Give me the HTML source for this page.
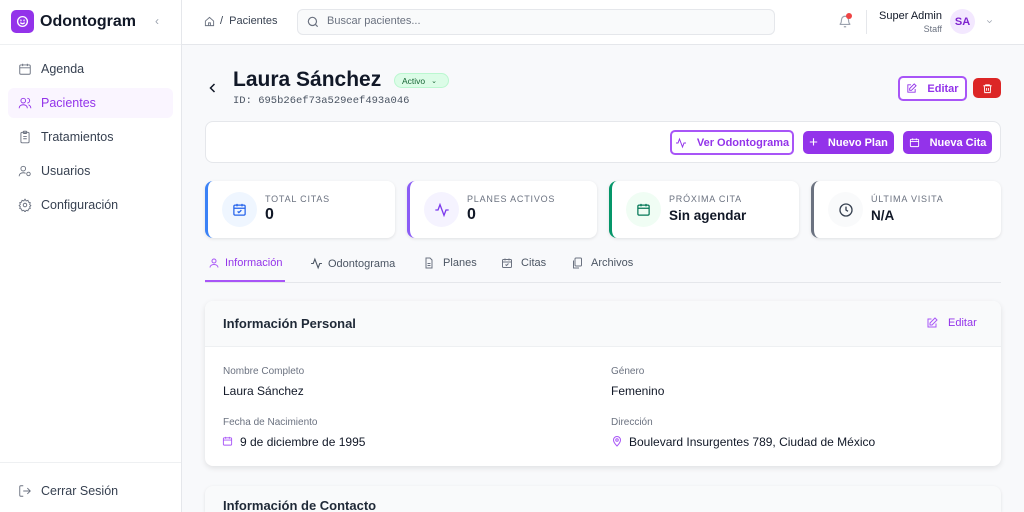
<!DOCTYPE html>
<html style="width:1024px;height:512px;overflow:hidden"><head><meta charset="utf-8"><style>
*{box-sizing:border-box;margin:0;padding:0}
body{width:1024px;height:512px;overflow:hidden;background:#f8f9fb;font-family:"Liberation Sans",sans-serif;color:#111827;position:relative}
.a{position:absolute}
svg{display:block}
.side{left:0;top:0;width:182px;height:512px;background:#fff;border-right:1px solid #e5e7eb}
.nav{left:8px;width:165px;height:30px;border-radius:6px;font-size:12.5px;color:#374151;display:flex;align-items:center;padding-left:10px;gap:9px}
.card{background:#fff;border-radius:8px;box-shadow:0 1px 3px rgba(0,0,0,.1);}
.stat{top:181px;width:190px;height:57px}
.stat .ic{position:absolute;left:14px;top:11px;width:35px;height:35px;border-radius:50%;display:flex;align-items:center;justify-content:center}
.stat .l{position:absolute;left:57px;top:13px;font-size:9px;letter-spacing:.8px;color:#6b7280}
.stat .v{position:absolute;left:57px;top:25px;font-size:16px;font-weight:bold}
.tab{top:257px;font-size:11px;color:#4b5563;display:flex;align-items:center;gap:5px}
.lb{font-size:10px;color:#6b7280}
.vl{font-size:12px;color:#111827}
.btn{border-radius:5px;font-size:11px;font-weight:bold;display:flex;align-items:center;justify-content:center;gap:10px}
</style></head><body>
<div class="a side">
 <div class="a" style="left:11px;top:10px;width:23px;height:23px;border-radius:5px;background:#9333ea;display:flex;align-items:center;justify-content:center"><svg width="13" height="13" viewBox="0 0 24 24" fill="none" stroke="#fff" stroke-width="2.5"><circle cx="12" cy="12" r="9"/><path d="M8 14s1.5 2 4 2 4-2 4-2"/><circle cx="9" cy="10" r=".5"/><circle cx="15" cy="10" r=".5"/></svg></div>
 <div class="a" style="left:40px;top:13px;font-size:16px;font-weight:bold">Odontogram</div>
 <div class="a" style="left:155px;top:14px;color:#9ca3af;font-size:12px">‹</div>
 <div class="a" style="left:0;top:44px;width:181px;border-top:1px solid #eef0f2"></div>
 <div class="a nav" style="top:54px"><svg width="14" height="14" viewBox="0 0 24 24" fill="none" stroke="#6b7280" stroke-width="1.6"><rect x="3" y="5" width="18" height="16" rx="2"/><path d="M3 10h18M8 3v4M16 3v4"/></svg>Agenda</div>
 <div class="a nav" style="top:88px;background:#faf5ff;color:#9333ea"><svg width="14" height="14" viewBox="0 0 24 24" fill="none" stroke="#9333ea" stroke-width="1.6"><circle cx="9" cy="8" r="4"/><path d="M2 21c0-4 3-6 7-6s7 2 7 6M16 4a4 4 0 010 8M22 21c0-3-2-5-4-6"/></svg>Pacientes</div>
 <div class="a nav" style="top:122px"><svg width="14" height="14" viewBox="0 0 24 24" fill="none" stroke="#6b7280" stroke-width="1.6"><rect x="5" y="4" width="14" height="18" rx="2"/><rect x="9" y="2" width="6" height="4" rx="1"/><path d="M9 11h6M9 15h6"/></svg>Tratamientos</div>
 <div class="a nav" style="top:156px"><svg width="14" height="14" viewBox="0 0 24 24" fill="none" stroke="#6b7280" stroke-width="1.6"><circle cx="9" cy="8" r="4"/><path d="M2 21c0-4 3-6 7-6 2 0 3 .5 4 1"/><circle cx="18" cy="17" r="3"/></svg>Usuarios</div>
 <div class="a nav" style="top:190px"><svg width="14" height="14" viewBox="0 0 24 24" fill="none" stroke="#6b7280" stroke-width="1.6"><circle cx="12" cy="12" r="3"/><path d="M12 2l2 3 3-1 1 3 3 1-1 3 2 2-2 2 1 3-3 1-1 3-3-1-2 3-2-3-3 1-1-3-3-1 1-3-2-2 2-2-1-3 3-1 1-3 3 1z"/></svg>Configuración</div>
 <div class="a" style="left:0;top:462px;width:181px;border-top:1px solid #eef0f2"></div>
 <div class="a nav" style="top:476px"><svg width="14" height="14" viewBox="0 0 24 24" fill="none" stroke="#6b7280" stroke-width="1.6"><path d="M9 21H5a2 2 0 01-2-2V5a2 2 0 012-2h4M16 17l5-5-5-5M21 12H9"/></svg>Cerrar Sesión</div>
</div>
<div class="a" style="left:182px;top:0;width:842px;height:45px;background:#fff;border-bottom:1px solid #e5e7eb"></div>
<svg class="a" style="left:204px;top:16px" width="11" height="11" viewBox="0 0 24 24" fill="none" stroke="#6b7280" stroke-width="2"><path d="M3 11l9-8 9 8v10H3z"/><path d="M10 21v-6h4v6"/></svg>
<div class="a" style="left:220px;top:15px;font-size:11px;color:#374151">/&nbsp;&nbsp;Pacientes</div>
<div class="a" style="left:297px;top:9px;width:478px;height:26px;border:1px solid #e5e7eb;border-radius:6px;background:#f9fafb"></div>
<svg class="a" style="left:306px;top:15px" width="14" height="14" viewBox="0 0 24 24" fill="none" stroke="#6b7280" stroke-width="2"><circle cx="11" cy="11" r="7"/><path d="M20 20l-4-4"/></svg>
<div class="a" style="left:327px;top:15px;font-size:11px;color:#6b7280">Buscar pacientes...</div>
<svg class="a" style="left:838px;top:14px" width="14" height="15" viewBox="0 0 24 24" fill="none" stroke="#9ca3af" stroke-width="2"><path d="M6 9a6 6 0 0112 0c0 7 3 8 3 8H3s3-1 3-8M10 21h4"/></svg>
<div class="a" style="left:846px;top:13px;width:6px;height:6px;border-radius:50%;background:#ef4444"></div>
<div class="a" style="left:866px;top:10px;height:24px;border-left:1px solid #e5e7eb"></div>
<div class="a" style="left:860px;top:10px;width:82px;text-align:right;font-size:11px;color:#111827">Super Admin</div>
<div class="a" style="left:860px;top:24px;width:82px;text-align:right;font-size:9px;color:#6b7280">Staff</div>
<div class="a" style="left:950px;top:9px;width:25px;height:25px;border-radius:50%;background:#f3e8ff;color:#7e22ce;font-weight:bold;font-size:11px;display:flex;align-items:center;justify-content:center">SA</div>
<svg class="a" style="left:985px;top:17px" width="9" height="9" viewBox="0 0 24 24" fill="none" stroke="#9ca3af" stroke-width="2"><path d="M6 9l6 6 6-6"/></svg>

<svg class="a" style="left:207px;top:82px" width="12" height="12" viewBox="0 0 24 24" fill="none" stroke="#111827" stroke-width="3"><path d="M15 4l-8 8 8 8"/></svg>
<div class="a" style="left:233px;top:68px;font-size:21px;font-weight:bold">Laura Sánchez</div>
<div class="a" style="left:394px;top:73px;width:55px;height:15px;border-radius:8px;background:#dcfce7;border:1px solid #bbf7d0;font-size:8.5px;color:#166534;display:flex;align-items:center;padding-left:7px">Activo <span style="margin-left:6px;font-size:7px">⌄</span></div>
<div class="a" style="left:233px;top:95px;font-family:'Liberation Mono',monospace;font-size:10.5px;color:#4b5563">ID: 695b26ef73a529eef493a046</div>
<div class="a btn" style="left:898px;top:76px;width:69px;height:25px;border:2px solid #a855f7;color:#9333ea;background:#fff"><svg width="11" height="11" viewBox="0 0 24 24" fill="none" stroke="#9333ea" stroke-width="2"><path d="M11 4H4v16h16v-7"/><path d="M18 2l4 4-10 10H8v-4z"/></svg>Editar</div>
<div class="a btn" style="left:973px;top:78px;width:28px;height:20px;background:#dc2626"><svg width="11" height="11" viewBox="0 0 24 24" fill="none" stroke="#fff" stroke-width="2"><path d="M3 6h18M8 6V4h8v2M5 6l1 15h12l1-15M10 11v6M14 11v6"/></svg></div>

<div class="a card" style="left:205px;top:121px;width:796px;height:42px;border:1px solid #e5e7eb;box-shadow:none"></div>
<div class="a btn" style="left:670px;top:130px;width:124px;height:25px;border:2px solid #a855f7;background:#fff;color:#9333ea"><svg width="12" height="12" viewBox="0 0 24 24" fill="none" stroke="#9333ea" stroke-width="2"><path d="M2 12h4l3-8 6 16 3-8h4"/></svg>Ver Odontograma</div>
<div class="a btn" style="left:803px;top:131px;width:91px;height:23px;background:#9333ea;color:#fff"><span style="font-size:15px;font-weight:normal">+</span>Nuevo Plan</div>
<div class="a btn" style="left:903px;top:131px;width:89px;height:23px;background:#9333ea;color:#fff"><svg width="11" height="11" viewBox="0 0 24 24" fill="none" stroke="#fff" stroke-width="2"><rect x="3" y="5" width="18" height="16" rx="2"/><path d="M3 10h18M8 3v4M16 3v4"/></svg>Nueva Cita</div>

<div class="a card stat" style="left:205px;border-left:3px solid #3b82f6"><div class="ic" style="background:#eff6ff"><svg width="15" height="15" viewBox="0 0 24 24" fill="none" stroke="#2563eb" stroke-width="2"><rect x="3" y="5" width="18" height="16" rx="2"/><path d="M3 10h18M8 3v4M16 3v4M9 15l2 2 4-4"/></svg></div><div class="l">TOTAL CITAS</div><div class="v">0</div></div>
<div class="a card stat" style="left:407px;border-left:3px solid #8b5cf6"><div class="ic" style="background:#f5f3ff"><svg width="16" height="16" viewBox="0 0 24 24" fill="none" stroke="#7c3aed" stroke-width="2"><path d="M2 12h4l3-8 6 16 3-8h4"/></svg></div><div class="l">PLANES ACTIVOS</div><div class="v">0</div></div>
<div class="a card stat" style="left:609px;border-left:3px solid #059669"><div class="ic" style="background:#f0fdf4"><svg width="15" height="15" viewBox="0 0 24 24" fill="none" stroke="#047857" stroke-width="2"><rect x="3" y="5" width="18" height="16" rx="2"/><path d="M3 10h18M8 3v4M16 3v4"/></svg></div><div class="l">PRÓXIMA CITA</div><div class="v" style="font-size:13.5px;top:27px">Sin agendar</div></div>
<div class="a card stat" style="left:811px;border-left:3px solid #6b7280"><div class="ic" style="background:#f9fafb"><svg width="16" height="16" viewBox="0 0 24 24" fill="none" stroke="#374151" stroke-width="2"><circle cx="12" cy="12" r="9"/><path d="M12 7v5l3 2"/></svg></div><div class="l">ÚLTIMA VISITA</div><div class="v" style="font-size:13.5px;top:27px">N/A</div></div>

<div class="a" style="left:205px;top:282px;width:796px;border-top:1px solid #e5e7eb"></div>
<div class="a" style="left:205px;top:280px;width:80px;border-top:2px solid #a855f7"></div>
<div class="a tab" style="left:208px;color:#9333ea"><svg width="12" height="12" viewBox="0 0 24 24" fill="none" stroke="#a855f7" stroke-width="2"><circle cx="12" cy="8" r="4"/><path d="M4 21c0-4 4-6 8-6s8 2 8 6"/></svg>Información</div>
<div class="a tab" style="left:310px"><svg width="13" height="13" viewBox="0 0 24 24" fill="none" stroke="#4b5563" stroke-width="2"><path d="M2 12h4l3-8 6 16 3-8h4"/></svg>Odontograma</div>
<div class="a tab" style="left:423px"><svg width="12" height="12" viewBox="0 0 24 24" fill="none" stroke="#6b7280" stroke-width="2"><path d="M14 2H6v20h12V6z"/><path d="M9 13h6M9 17h6"/></svg>&nbsp;Planes</div>
<div class="a tab" style="left:501px"><svg width="12" height="12" viewBox="0 0 24 24" fill="none" stroke="#6b7280" stroke-width="2"><rect x="3" y="5" width="18" height="16" rx="2"/><path d="M3 10h18M8 3v4M16 3v4M9 15l2 2 4-4"/></svg>&nbsp;Citas</div>
<div class="a tab" style="left:571px"><svg width="12" height="12" viewBox="0 0 24 24" fill="none" stroke="#6b7280" stroke-width="2"><rect x="8" y="2" width="13" height="16" rx="2"/><path d="M16 22H5V7"/></svg>&nbsp;Archivos</div>

<div class="a card" style="left:205px;top:301px;width:796px;height:165px;overflow:hidden;box-shadow:0 2px 6px rgba(0,0,0,.1)">
 <div style="height:46px;background:#f9fafb;border-bottom:1px solid #eef0f2"></div>
</div>
<div class="a" style="left:223px;top:316px;font-size:13px;font-weight:bold;color:#1f2937">Información Personal</div>
<svg class="a" style="left:926px;top:317px" width="12" height="12" viewBox="0 0 24 24" fill="none" stroke="#a855f7" stroke-width="2"><path d="M11 4H4v16h16v-7"/><path d="M18 2l4 4-10 10H8v-4z"/></svg>
<div class="a" style="left:948px;top:317px;font-size:11px;color:#9333ea">Editar</div>
<div class="a lb" style="left:223px;top:366px">Nombre Completo</div>
<div class="a vl" style="left:223px;top:384px">Laura Sánchez</div>
<div class="a lb" style="left:611px;top:366px">Género</div>
<div class="a vl" style="left:611px;top:384px">Femenino</div>
<div class="a lb" style="left:223px;top:417px">Fecha de Nacimiento</div>
<svg class="a" style="left:222px;top:435px" width="11" height="12" viewBox="0 0 24 24" fill="none" stroke="#a855f7" stroke-width="2"><rect x="3" y="5" width="18" height="16" rx="2"/><path d="M3 10h18M8 3v4M16 3v4"/></svg>
<div class="a vl" style="left:240px;top:435px">9 de diciembre de 1995</div>
<div class="a lb" style="left:611px;top:417px">Dirección</div>
<svg class="a" style="left:611px;top:435px" width="12" height="12" viewBox="0 0 24 24" fill="none" stroke="#a855f7" stroke-width="2"><path d="M12 22s7-7 7-12a7 7 0 00-14 0c0 5 7 12 7 12z"/><circle cx="12" cy="10" r="2.5"/></svg>
<div class="a vl" style="left:629px;top:435px">Boulevard Insurgentes 789, Ciudad de México</div>

<div class="a card" style="left:205px;top:486px;width:796px;height:26px;background:#f9fafb;border-radius:8px 8px 0 0"></div>
<div class="a" style="left:223px;top:498px;font-size:13px;font-weight:bold;color:#1f2937">Información de Contacto</div>
</body></html>
